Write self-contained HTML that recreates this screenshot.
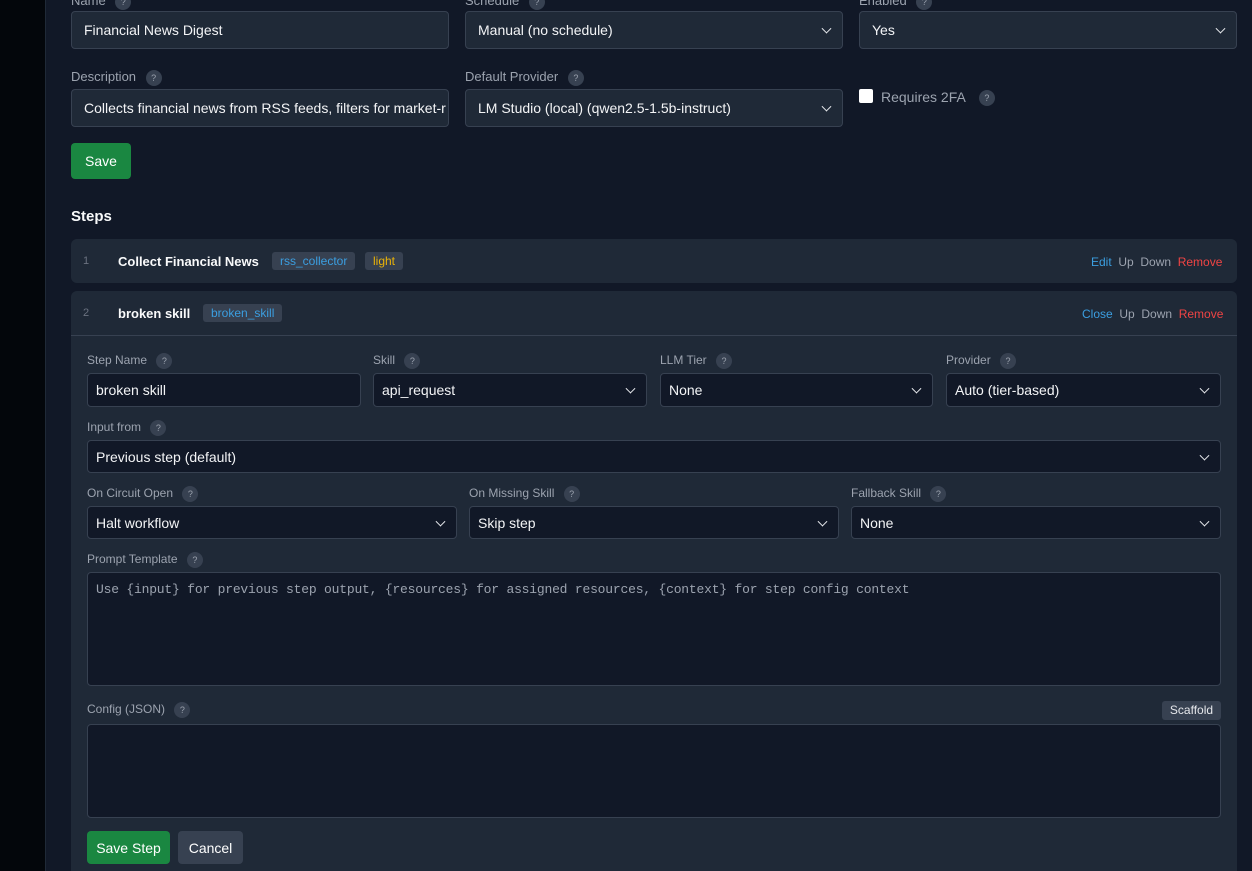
<!DOCTYPE html>
<html style="width:1252px;height:871px;overflow:hidden"><head><style>
*{box-sizing:border-box;margin:0;padding:0}
body{width:1252px;height:871px;overflow:hidden;background:#111827;font-family:"Liberation Sans",sans-serif;color:#e5e7eb;position:relative;font-size:14px}
.a{position:absolute}
.side{left:0;top:0;width:46px;height:871px;background:#03060b;border-right:1px solid #1f2937}
.lbl{font-size:13px;color:#9ca3af;white-space:nowrap}
.q{display:inline-block;width:16px;height:16px;border-radius:50%;background:#374151;color:#9ca3af;font-size:9px;text-align:center;line-height:16px;margin-left:6px;vertical-align:middle}
.in{border:1px solid #374151;border-radius:4px;background:#1f2937;color:#f3f4f6;font-size:14px;padding:0 12px;display:flex;align-items:center;white-space:nowrap;overflow:hidden}
.in.d{background:#111827;padding:0 8px}
.sel::after{content:"";position:absolute;right:12px;top:50%;width:6px;height:6px;border-right:1.5px solid #e5e7eb;border-bottom:1.5px solid #e5e7eb;transform:translateY(-70%) rotate(45deg)}
.btn{border-radius:4px;color:#fff;font-size:14px;display:flex;align-items:center;justify-content:center}
.card{background:#1f2937;border-radius:6px}
.tag{font-size:12px;background:#374151;border-radius:3px;padding:2px 8px}
.act{font-size:12px;color:#9ca3af}
</style></head><body>
<div class="a side"></div>

<div class="a lbl" style="left:71px;top:-7px">Name <span class="q">?</span></div>
<div class="a lbl" style="left:465px;top:-7px">Schedule <span class="q">?</span></div>
<div class="a lbl" style="left:859px;top:-7px">Enabled <span class="q">?</span></div>
<div class="a in" style="left:71px;top:11px;width:378px;height:38px">Financial News Digest</div>
<div class="a in sel" style="left:465px;top:11px;width:378px;height:38px">Manual (no schedule)</div>
<div class="a in sel" style="left:859px;top:11px;width:378px;height:38px">Yes</div>

<div class="a lbl" style="left:71px;top:69px">Description <span class="q">?</span></div>
<div class="a lbl" style="left:465px;top:69px">Default Provider <span class="q">?</span></div>
<div class="a in" style="left:71px;top:89px;width:378px;height:38px">Collects financial news from RSS feeds, filters for market-r</div>
<div class="a in sel" style="left:465px;top:89px;width:378px;height:38px">LM Studio (local) (qwen2.5-1.5b-instruct)</div>
<div class="a" style="left:859px;top:89px;width:14px;height:14px;background:#fff;border-radius:2px"></div>
<div class="a lbl" style="left:881px;top:89px;font-size:14px">Requires 2FA <span class="q" style="margin-left:10px">?</span></div>

<div class="a btn" style="left:71px;top:143px;width:60px;height:36px;background:#1a8741">Save</div>
<div class="a" style="left:71px;top:208px;font-size:15px;font-weight:bold;color:#f9fafb">Steps</div>

<div class="a card" style="left:71px;top:239px;width:1166px;height:44px"></div>
<div class="a" style="left:83px;top:255px;font-size:11px;color:#6b7280">1</div>
<div class="a" style="left:118px;top:254px;font-weight:bold;font-size:13px;color:#f9fafb">Collect Financial News</div>
<div class="a tag" style="left:272px;top:252px;color:#3b9ee0">rss_collector</div>
<div class="a tag" style="left:365px;top:252px;color:#eab308">light</div>
<div class="a act" style="left:1091px;top:255px"><span style="color:#3b9ee0">Edit</span>&nbsp; Up&nbsp; Down&nbsp; <span style="color:#ef4444">Remove</span></div>

<div class="a card" style="left:71px;top:291px;width:1166px;height:580px;border-radius:6px 6px 0 0"></div>
<div class="a" style="left:71px;top:335px;width:1166px;height:1px;background:#374151"></div>
<div class="a" style="left:83px;top:307px;font-size:11px;color:#6b7280">2</div>
<div class="a" style="left:118px;top:306px;font-weight:bold;font-size:13px;color:#f9fafb">broken skill</div>
<div class="a tag" style="left:203px;top:304px;color:#3b9ee0">broken_skill</div>
<div class="a act" style="left:1082px;top:307px"><span style="color:#3b9ee0">Close</span>&nbsp; Up&nbsp; Down&nbsp; <span style="color:#ef4444">Remove</span></div>

<div class="a lbl" style="left:87px;top:353px;font-size:12px">Step Name <span class="q">?</span></div>
<div class="a lbl" style="left:373px;top:353px;font-size:12px">Skill <span class="q">?</span></div>
<div class="a lbl" style="left:660px;top:353px;font-size:12px">LLM Tier <span class="q">?</span></div>
<div class="a lbl" style="left:946px;top:353px;font-size:12px">Provider <span class="q">?</span></div>
<div class="a in d" style="left:87px;top:373px;width:274px;height:34px">broken skill</div>
<div class="a in d sel" style="left:373px;top:373px;width:274px;height:34px">api_request</div>
<div class="a in d sel" style="left:660px;top:373px;width:273px;height:34px">None</div>
<div class="a in d sel" style="left:946px;top:373px;width:275px;height:34px">Auto (tier-based)</div>

<div class="a lbl" style="left:87px;top:420px;font-size:12px">Input from <span class="q">?</span></div>
<div class="a in d sel" style="left:87px;top:440px;width:1134px;height:33px">Previous step (default)</div>

<div class="a lbl" style="left:87px;top:486px;font-size:12px">On Circuit Open <span class="q">?</span></div>
<div class="a lbl" style="left:469px;top:486px;font-size:12px">On Missing Skill <span class="q">?</span></div>
<div class="a lbl" style="left:851px;top:486px;font-size:12px">Fallback Skill <span class="q">?</span></div>
<div class="a in d sel" style="left:87px;top:506px;width:370px;height:33px">Halt workflow</div>
<div class="a in d sel" style="left:469px;top:506px;width:370px;height:33px">Skip step</div>
<div class="a in d sel" style="left:851px;top:506px;width:370px;height:33px">None</div>

<div class="a lbl" style="left:87px;top:552px;font-size:12px">Prompt Template <span class="q">?</span></div>
<div class="a in d" style="left:87px;top:572px;width:1134px;height:114px;align-items:flex-start;padding-top:9px;font-family:'Liberation Mono',monospace;font-size:13px;color:#9ca3af;letter-spacing:-0.2px">Use {input} for previous step output, {resources} for assigned resources, {context} for step config context</div>

<div class="a lbl" style="left:87px;top:702px;font-size:12px">Config (JSON) <span class="q">?</span></div>
<div class="a" style="left:1162px;top:701px;width:59px;height:19px;background:#374151;border-radius:3px;font-size:12px;color:#e5e7eb;text-align:center;line-height:19px">Scaffold</div>
<div class="a in d" style="left:87px;top:724px;width:1134px;height:94px"></div>

<div class="a btn" style="left:87px;top:831px;width:83px;height:33px;background:#1a8741">Save Step</div>
<div class="a btn" style="left:178px;top:831px;width:65px;height:33px;background:#374151">Cancel</div>
</body></html>
